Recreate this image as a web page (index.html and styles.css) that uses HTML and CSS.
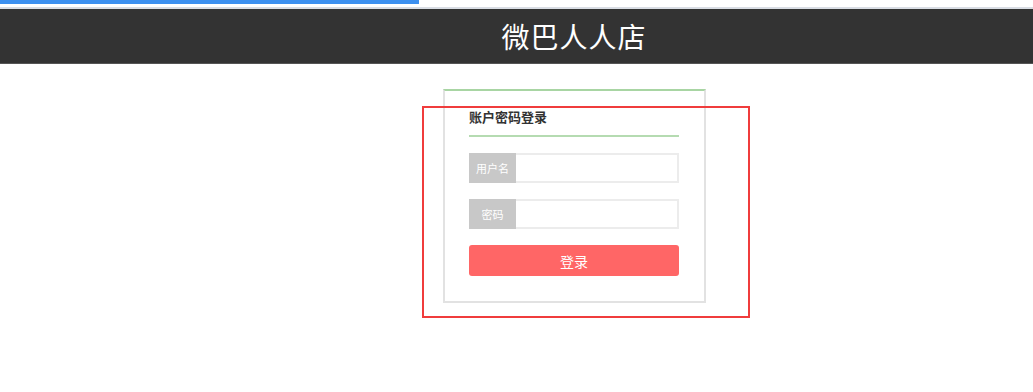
FILE: index.html
```html
<!DOCTYPE html>
<html lang="zh-CN">
<head>
    <meta charset="UTF-8">
    <meta name="viewport" content="width=device-width, initial-scale=1.0">
    <title>微巴人人店</title>
    <link rel="stylesheet" href="styles.css">
</head>
<body>

    <!-- faixa de seleção no topo -->
    <div class="selbar"></div>
    <div class="topline"></div>

    <!-- Cabeçalho -->
    <div class="header">
        <h1>微巴人人店</h1>
    </div>

    <div class="main">
        <div class="login-box">
            <h2>账户密码登录</h2>
            <div class="form-group">
                <span class="addon">用户名</span>
                <input type="text" id="usuario">
            </div>
            <div class="form-group">
                <span class="addon">密码</span>
                <input type="password" id="senha">
            </div>
            <button class="btn-login">登录</button>
        </div>
        <div class="mark"></div>
    </div>

</body>
</html>
```

FILE: styles.css
```css
body {
    font-family: "Noto Sans CJK SC", "Liberation Sans", sans-serif;
    margin: 0;
    background: #fff;
}
.selbar {
    width: 419px;
    height: 4px;
    background: #3c90f0;
}
.topline {
    height: 3px;
    border-bottom: 2px solid #d9dde4;
}
.header {
    height: 54px;
    background-color: #333;
    display: flex;
    align-items: center;
    justify-content: center;
    padding-left: 115px;
    border-bottom: 1px solid #555;
}
.header h1 {
    margin: 0;
    color: #fff;
    font-family: "Liberation Serif", "Noto Sans CJK SC", serif;
    font-size: 28px;
    font-weight: normal;
    letter-spacing: 1px;
}
.main {
    position: relative;
    padding-top: 25px;
    padding-left: 443px;
    padding-bottom: 80px;
}
.login-box {
    width: 210px;
    height: 193px;
    padding: 17px 25px 0 24px;
    border: 2px solid #e2e2e2;
    border-top-color: #a8d5a3;
}
.login-box h2 {
    margin: 0 0 16px;
    padding-bottom: 9px;
    font-size: 13px;
    font-weight: bold;
    color: #333;
    border-bottom: 2px solid #b5dbb1;
    line-height: 18px;
}
.form-group {
    display: flex;
    height: 30px;
    margin-bottom: 16px;
}
.addon {
    flex: none;
    width: 47px;
    background: #c8c8c8;
    color: #fff;
    font-size: 11px;
    display: flex;
    align-items: center;
    justify-content: center;
}
.form-group input {
    flex: 1;
    min-width: 0;
    border: 2px solid #ececec;
    border-left: none;
    padding: 0 6px;
    margin: 0;
    outline: none;
}
.btn-login {
    display: block;
    width: 210px;
    height: 31px;
    margin-top: 1px;
    border: none;
    border-radius: 3px;
    background-color: #ff6666;
    color: #fff;
    font-family: inherit;
    font-size: 14px;
    cursor: pointer;
}
.btn-login:hover {
    opacity: 0.8;
}
.mark {
    position: absolute;
    left: 422px;
    top: 42px;
    width: 324px;
    height: 208px;
    border: 2px solid #f03c3c;
}
```
